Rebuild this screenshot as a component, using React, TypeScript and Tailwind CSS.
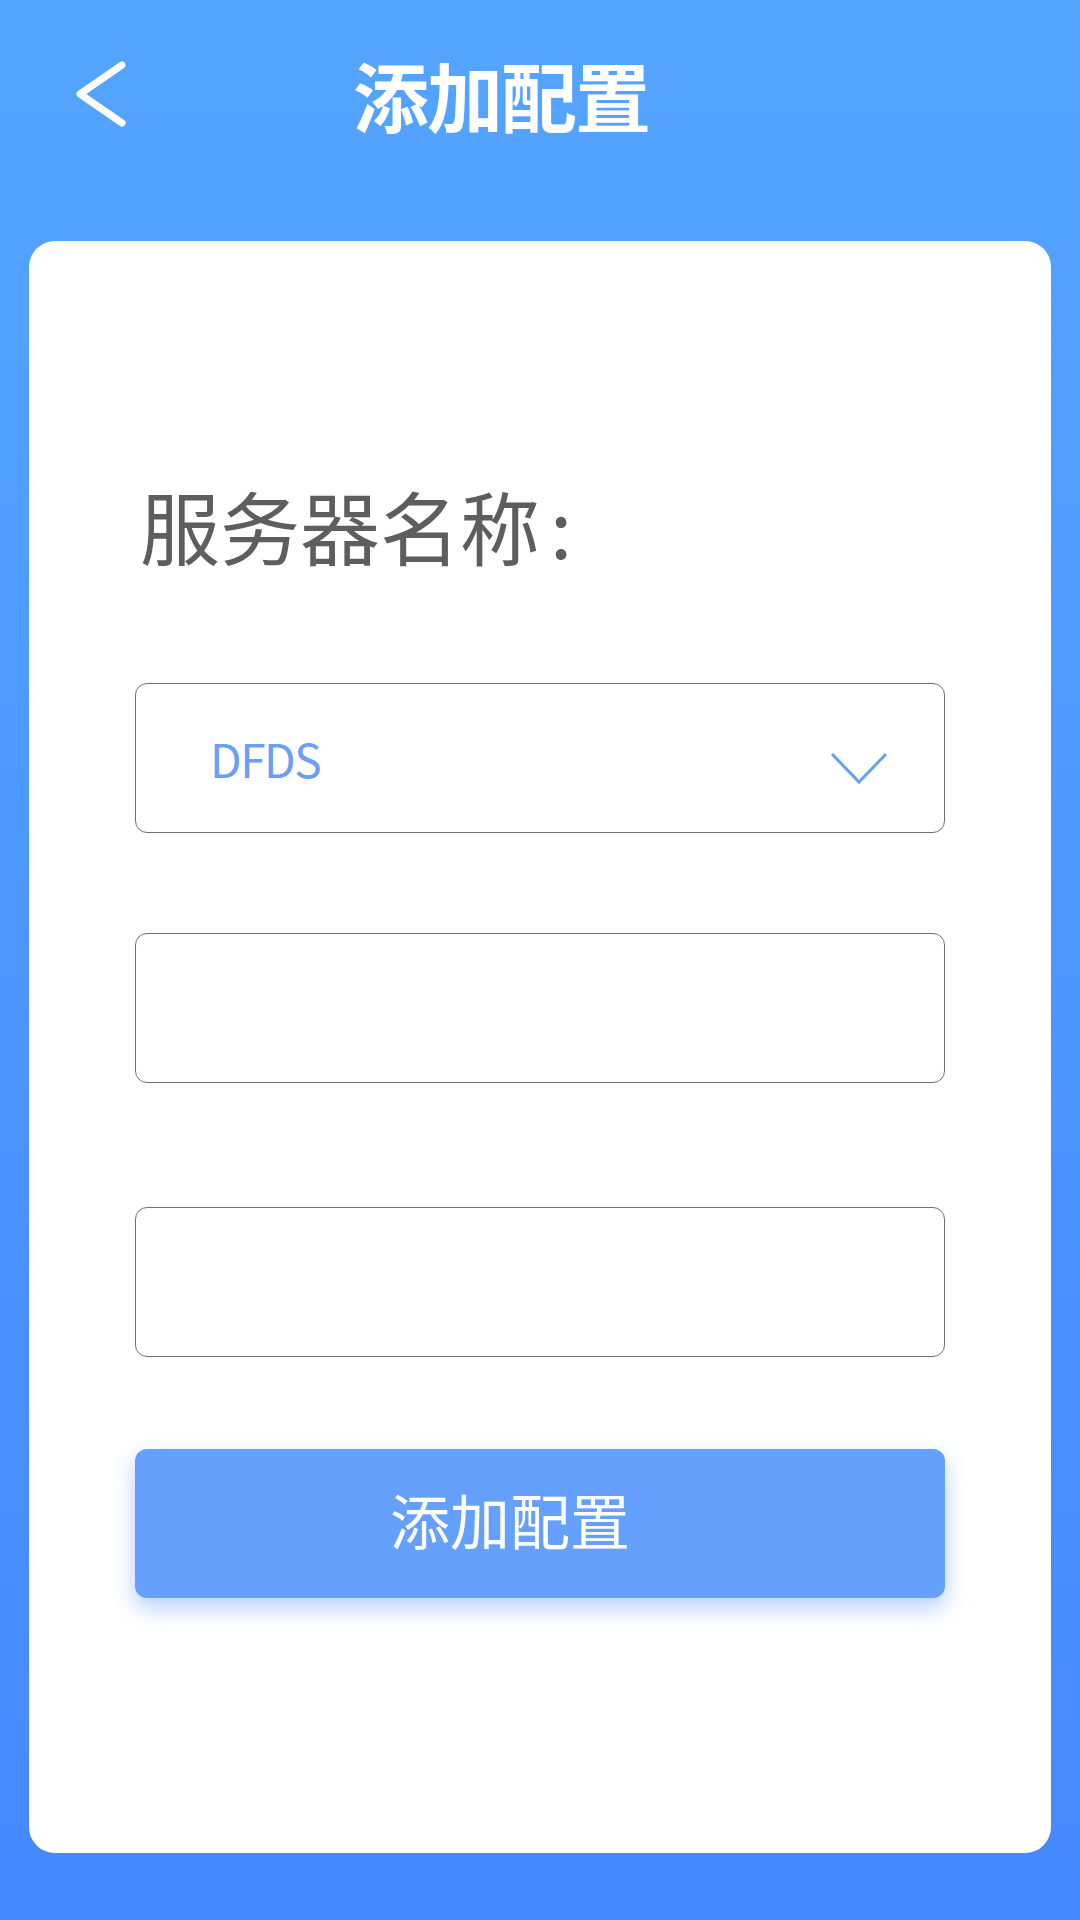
import React from 'react'

const cjk = { fontFamily: '"Noto Sans CJK SC", "Noto Sans", sans-serif' }

function BackIcon() {
    return (
        <svg width="56" height="72" viewBox="0 0 56 72" fill="none">
            <path d="M49 7 L7 36 L49 65" stroke="white" strokeWidth="7" strokeLinecap="round" strokeLinejoin="round" />
        </svg>
    )
}

function ChevronDown() {
    return (
        <svg width="58" height="34" viewBox="0 0 58 34" fill="none">
            <path d="M2 3 L29 31 L56 3" stroke="#6a9ff5" strokeWidth="3" strokeLinejoin="miter" />
        </svg>
    )
}

function Field({ children }: { children?: React.ReactNode }) {
    return (
        <div className="h-[150px] w-full rounded-[12px] border border-[#6f6f6f] bg-white flex items-center">
            {children}
        </div>
    )
}

export default function App() {
    return (
        <div
            className="w-[1080px] h-[1920px] flex flex-col bg-gradient-to-b from-[#54a5fe] to-[#4688ff]"
            style={cjk}
        >
            <header className="h-[241px] flex items-start pt-[58px]">
                <div className="ml-[73px]">
                    <BackIcon />
                </div>
                <h1 className="ml-[224px] mt-[-10px] text-[76px] leading-[92px] font-bold text-white tracking-[-2px]">
                    添加配置
                </h1>
            </header>

            <main className="mx-[29px] h-[1612px] rounded-[26px] bg-white px-[106px] flex flex-col">
                <div className="pt-[243px] ml-[5px] text-[80px] leading-[80px] text-[#5e5e5e]">
                    服务器名称<span className="ml-[10px]">:</span>
                </div>

                <div className="mt-[119px]">
                    <Field>
                        <span className="ml-[74px] text-[46px] tracking-[-1.5px] text-[#6a9ff5]">
                            DFDS
                        </span>
                        <span className="ml-auto mr-[56px] mt-[20px]">
                            <ChevronDown />
                        </span>
                    </Field>
                </div>

                <div className="mt-[100px]">
                    <Field />
                </div>

                <div className="mt-[124px]">
                    <Field />
                </div>

                <button className="mt-[92px] h-[149px] w-full rounded-[12px] bg-[#66a0fd] shadow-[0_10px_22px_rgba(70,137,254,0.4)] flex items-center justify-center pr-[60px] pb-[10px] text-[60px] text-white">
                    添加配置
                </button>
            </main>
        </div>
    )
}
